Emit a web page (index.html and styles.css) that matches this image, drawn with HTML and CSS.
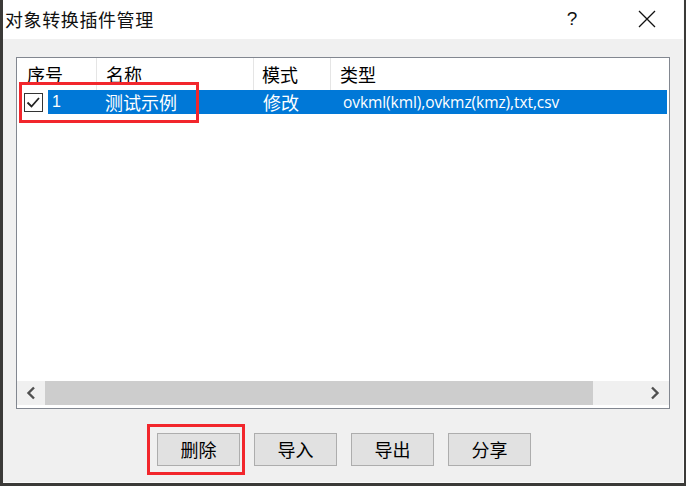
FILE: index.html
```html
<!DOCTYPE html>
<html lang="zh">
<head>
<meta charset="utf-8">
<link rel="stylesheet" href="styles.css">
</head>
<body>
<div class="dialog">
  <div class="titlebar">
    <span class="title">对象转换插件管理</span>
    <span class="help">?</span>
    <span class="close">
      <svg width="18" height="18" viewBox="0 0 18 18"><path d="M1 1L17 17M17 1L1 17" stroke="#111" stroke-width="1.3" fill="none"/></svg>
    </span>
  </div>
  <div class="client">
    <div class="list">
      <div class="header">
        <div class="hcell c1">序号</div>
        <div class="hcell c2">名称</div>
        <div class="hcell c3">模式</div>
        <div class="hcell c4">类型</div>
      </div>
      <div class="row">
        <div class="check">
          <svg width="19" height="19" viewBox="0 0 19 19"><rect x="0.5" y="0.5" width="18" height="18" fill="#fff" stroke="#333"/><path d="M3.5 9.5L7.5 13.5L15 5" stroke="#222" stroke-width="1.8" fill="none"/></svg>
        </div>
        <div class="sel">
          <div class="rcell r1">1</div>
          <div class="rcell r2">测试示例</div>
          <div class="rcell r3">修改</div>
          <div class="rcell r4">ovkml(kml),ovkmz(kmz),txt,csv</div>
        </div>
        <div class="mark mark-row"></div>
      </div>
      <div class="filler"></div>
      <div class="hscroll">
        <div class="sbtn left">
          <svg width="10" height="14" viewBox="0 0 10 14"><path d="M8 1.5L2.5 7L8 12.5" stroke="#505050" stroke-width="2.4" fill="none"/></svg>
        </div>
        <div class="thumb"></div>
        <div class="track"></div>
        <div class="sbtn right">
          <svg width="10" height="14" viewBox="0 0 10 14"><path d="M2 1.5L7.5 7L2 12.5" stroke="#505050" stroke-width="2.4" fill="none"/></svg>
        </div>
      </div>
    </div>
    <div class="buttons">
      <button class="btn marked">删除</button>
      <button class="btn">导入</button>
      <button class="btn">导出</button>
      <button class="btn">分享</button>
    </div>
  </div>
</div>
</body>
</html>
```
FILE: styles.css
```css
html, body {
  margin: 0;
  padding: 0;
}
body {
  width: 686px;
  height: 486px;
  background: #3b3a38;
  overflow: hidden;
  font-family: "Noto Sans CJK SC", "Noto Sans", sans-serif;
  font-size: 18px;
  color: #000;
}
.dialog {
  margin-left: 3px;
  width: 680px;
  height: 482px;
  background: #f0f0f0;
  border-right: 1px solid #fafafa;
  border-bottom: 1px solid #fafafa;
  display: flex;
  flex-direction: column;
}
.titlebar {
  height: 39px;
  background: #fff;
  display: flex;
  align-items: center;
  padding-left: 2px;
  flex: none;
}
.title {
  flex: 1;
  font-size: 18px;
  letter-spacing: 0.6px;
  color: #111;
  line-height: 39px;
  margin-top: -1px;
}
.help {
  width: 20px;
  text-align: center;
  font-family: "Liberation Sans", sans-serif;
  font-size: 19px;
  color: #111;
  margin-right: 56px;
  margin-top: -2px;
}
.close {
  width: 18px;
  height: 18px;
  margin-right: 27px;
  margin-top: -1px;
}
.close svg { display: block; }
.client {
  flex: 1;
  display: flex;
  flex-direction: column;
  padding: 18px 0 0 13px;
}
.list {
  position: relative;
  width: 652px;
  height: 350px;
  background: #fff;
  border: 1px solid #828790;
  display: flex;
  flex-direction: column;
}
.header {
  display: grid;
  grid-template-columns: 80px 157px 77px 1fr;
  height: 32px;
  flex: none;
}
.hcell {
  border-right: 1px solid #e5e5e5;
  line-height: 32px;
  padding-left: 10px;
  white-space: nowrap;
}
.hcell.c2 { padding-left: 9px; }
.hcell.c3 { padding-left: 8px; }
.hcell.c4 { border-right: none; padding-left: 9px; }
.row {
  display: flex;
  height: 24px;
  flex: none;
  align-items: center;
}
.check {
  width: 19px;
  height: 19px;
  margin-left: 7px;
  margin-right: 5px;
  flex: none;
}
.check svg { display: block; }
.sel {
  display: grid;
  grid-template-columns: 49px 157px 77px 1fr;
  background: #0078d7;
  color: #fff;
  height: 24px;
  width: 619px;
  flex: none;
}
.rcell {
  line-height: 24px;
  white-space: nowrap;
}
.r1 {
  padding-left: 4px;
  font-family: "Liberation Sans", sans-serif;
  font-size: 16px;
}
.r2 { padding-left: 8px; }
.r3 { padding-left: 9px; }
.r4 {
  padding-left: 12px;
  font-family: "Open Sans", sans-serif;
  font-size: 15.5px;
  letter-spacing: -0.08px;
}
.mark-row {
  position: absolute;
  left: 2px;
  top: 24px;
  width: 174px;
  height: 35px;
  border: 3px solid #f2262c;
}
.filler { flex: 1; }
.hscroll {
  height: 24px;
  display: flex;
  background: #f0f0f0;
  margin-bottom: 3px;
  flex: none;
}
.sbtn {
  width: 28px;
  display: flex;
  align-items: center;
  justify-content: center;
}
.thumb {
  width: 548px;
  background: #cdcdcd;
}
.track { flex: 1; }
.buttons {
  display: flex;
  gap: 14px;
  padding-left: 141px;
  margin-top: 24px;
}
.btn {
  position: relative;
  width: 83px;
  height: 33px;
  background: #e1e1e1;
  border: 1px solid #adadad;
  font-family: "Noto Sans CJK SC", sans-serif;
  font-size: 18px;
  color: #000;
  padding: 0;
  line-height: 31px;
}
.btn.marked::after {
  content: "";
  position: absolute;
  left: -11px;
  right: -6px;
  top: -10px;
  bottom: -10px;
  border: 3px solid #f2262c;
}
```
